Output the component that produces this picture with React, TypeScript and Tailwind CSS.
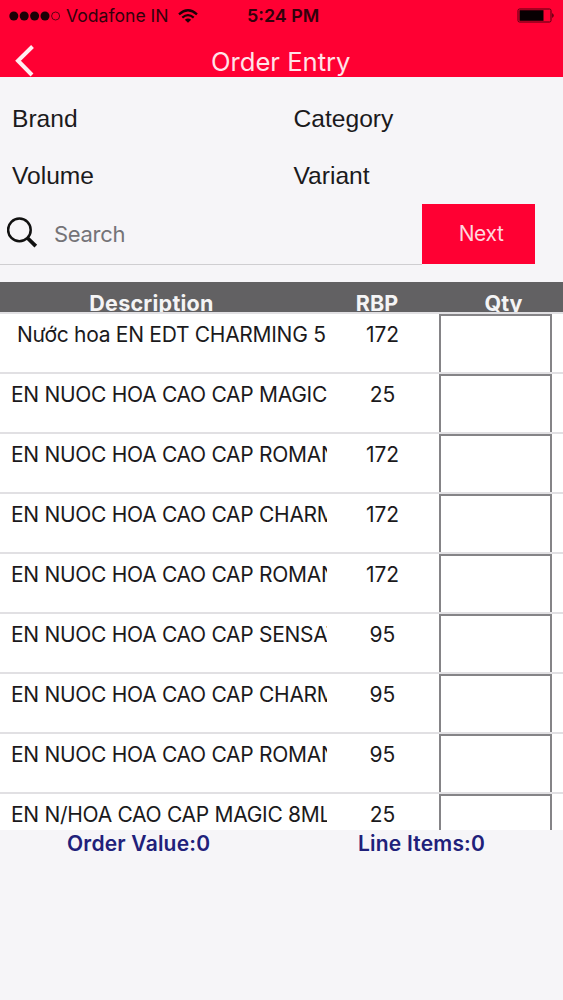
const ITEMS = [
  { id: 1, name: "Nước hoa EN EDT CHARMING 5", rbp: 172, indent: true },
  { id: 2, name: "EN NUOC HOA CAO CAP MAGIC", rbp: 25 },
  { id: 3, name: "EN NUOC HOA CAO CAP ROMAN", rbp: 172 },
  { id: 4, name: "EN NUOC HOA CAO CAP CHARM", rbp: 172 },
  { id: 5, name: "EN NUOC HOA CAO CAP ROMAN", rbp: 172 },
  { id: 6, name: "EN NUOC HOA CAO CAP SENSAT", rbp: 95 },
  { id: 7, name: "EN NUOC HOA CAO CAP CHARM", rbp: 95 },
  { id: 8, name: "EN NUOC HOA CAO CAP ROMAN", rbp: 95 },
  { id: 9, name: "EN N/HOA CAO CAP MAGIC 8ML", rbp: 25 },
];

const FILTERS = ["Brand", "Category", "Volume", "Variant"];

function StatusBar() {
  return (
    <div className="flex h-[31px] items-center text-[#33000b]">
      <div className="flex w-[247px] items-center pl-[9px]">
        <svg className="h-[10px] w-[52px]" viewBox="0 0 52 10">
          <circle cx="4.8" cy="5" r="4.5" fill="#1c0006" />
          <circle cx="15.2" cy="5" r="4.5" fill="#1c0006" />
          <circle cx="25.6" cy="5" r="4.5" fill="#1c0006" />
          <circle cx="36" cy="5" r="4.5" fill="#1c0006" />
          <circle cx="46.6" cy="5" r="4" fill="none" stroke="#4d0010" strokeWidth="0.9" />
        </svg>
        <span className="ml-[5px] w-[103px] text-[17.6px] leading-none whitespace-nowrap">Vodafone IN</span>
        <svg className="ml-[9px] h-[14px] w-[20px]" viewBox="0 0 20 14" fill="none" stroke="#1c0006">
          <path d="M1 5.3Q10-2.8 19 5.3" strokeWidth="2.3" />
          <path d="M4.3 8.6Q10 3.6 15.7 8.6" strokeWidth="2.3" />
          <path d="M10 13.8L6.8 10.7Q10 8.3 13.2 10.7Z" fill="#1c0006" stroke="none" />
        </svg>
      </div>
      <span className="w-[73px] text-[17.9px] font-semibold leading-none whitespace-nowrap">5:24 PM</span>
      <svg className="ml-[197px] h-[15px] w-[39px]" viewBox="0 0 39 15">
        <rect x="1" y="1" width="33" height="13" rx="1.5" fill="none" stroke="#4d0010" />
        <rect x="2.5" y="2.2" width="24" height="10.6" fill="#080002" />
        <path d="M35.3 5Q38 7.5 35.3 10Z" fill="#33000b" />
      </svg>
    </div>
  );
}

export default function App() {
  return (
    <div
      className="flex h-[1000px] w-[563px] flex-col overflow-hidden bg-[#f6f5f8] text-[#1b1a1c]"
      style={{ fontFamily: "Inter, 'Noto Sans', sans-serif" }}
    >
      {/* Header */}
      <header className="h-[77px] shrink-0 bg-[#ff0033]">
        <StatusBar />
        <div className="flex h-[46px] items-start">
          <svg className="mt-[14px] ml-[14px] h-[32px] w-[21px] shrink-0" viewBox="0 0 21 32" fill="none">
            <path d="M18.5 1.5L4 15.7L18 30" stroke="#ffeef1" strokeWidth="4" />
          </svg>
          <h1 className="mt-[15px] ml-[176px] text-[25.6px] leading-[32px] whitespace-nowrap text-[#ffe3e8]">
            Order Entry
          </h1>
        </div>
      </header>

      {/* Filters */}
      <div className="grid h-[127px] shrink-0 grid-cols-2 grid-rows-[57px_57px] pt-[14px] pl-3 font-['Liberation_Sans']">
        {FILTERS.map((label) => (
          <button key={label} className="flex items-center text-left text-[24.6px] leading-none text-[#1b1a1c] odd:pl-0 even:pl-[6px]">
            {label}
          </button>
        ))}
      </div>

      {/* Search */}
      <div className="flex h-[78px] shrink-0 items-start">
        <label className="flex h-[61px] w-[422px] items-center border-b border-[#cfced1] pl-[7px]">
          <svg className="mb-[2px] h-[32px] w-[32px]" viewBox="0 0 32 32" fill="none" stroke="#111">
            <circle cx="12.4" cy="12.9" r="11.3" strokeWidth="2.5" />
            <path d="M20.5 21L28.8 29.2" strokeWidth="3.8" />
          </svg>
          <input
            placeholder="Search"
            className="ml-[15px] w-[300px] bg-transparent text-[22px] tracking-[-0.3px] outline-none placeholder:text-[#747377]"
          />
        </label>
        <button className="h-[60px] w-[113px] bg-[#ff0033] pl-[5px] text-[21px] tracking-[-0.4px] text-[#ffd6dd]">
          Next
        </button>
      </div>

      {/* Table */}
      <div className="flex h-[30px] shrink-0 overflow-hidden bg-[#626163] pt-[8px] text-[21.5px] leading-[27px] font-bold text-[#f4f4f5]">
        <span className="w-[303px] text-center tracking-[0.25px]">Description</span>
        <span className="w-[148px] text-center">RBP</span>
        <span className="w-[105px] text-center">Qty</span>
      </div>
      <div className="h-[518px] shrink-0 overflow-hidden bg-white">
        {ITEMS.map((item) => (
          <div key={item.id} className="flex h-[60px] overflow-hidden border-t-2 border-[#e1e0e3]">
            <div className={item.indent ? "w-[327px] overflow-hidden pl-[17px]" : "w-[327px] overflow-hidden pl-[11px]"}>
              <span className="text-[21px] leading-[42px] tracking-[-0.29px] whitespace-nowrap">{item.name}</span>
            </div>
            <span className="w-[111px] text-center text-[21px] leading-[42px]">{item.rbp}</span>
            <input className="ml-[1px] h-[62px] w-[113px] border-2 border-[#858487] bg-white" />
          </div>
        ))}
      </div>

      {/* Totals */}
      <div className="flex text-[21px] leading-[27px] font-semibold tracking-[0.2px] text-[#20207a]">
        <span className="w-[281px] pl-[67px] whitespace-nowrap">Order Value:0</span>
        <span className="pl-[77px] whitespace-nowrap">Line Items:0</span>
      </div>
    </div>
  );
}
